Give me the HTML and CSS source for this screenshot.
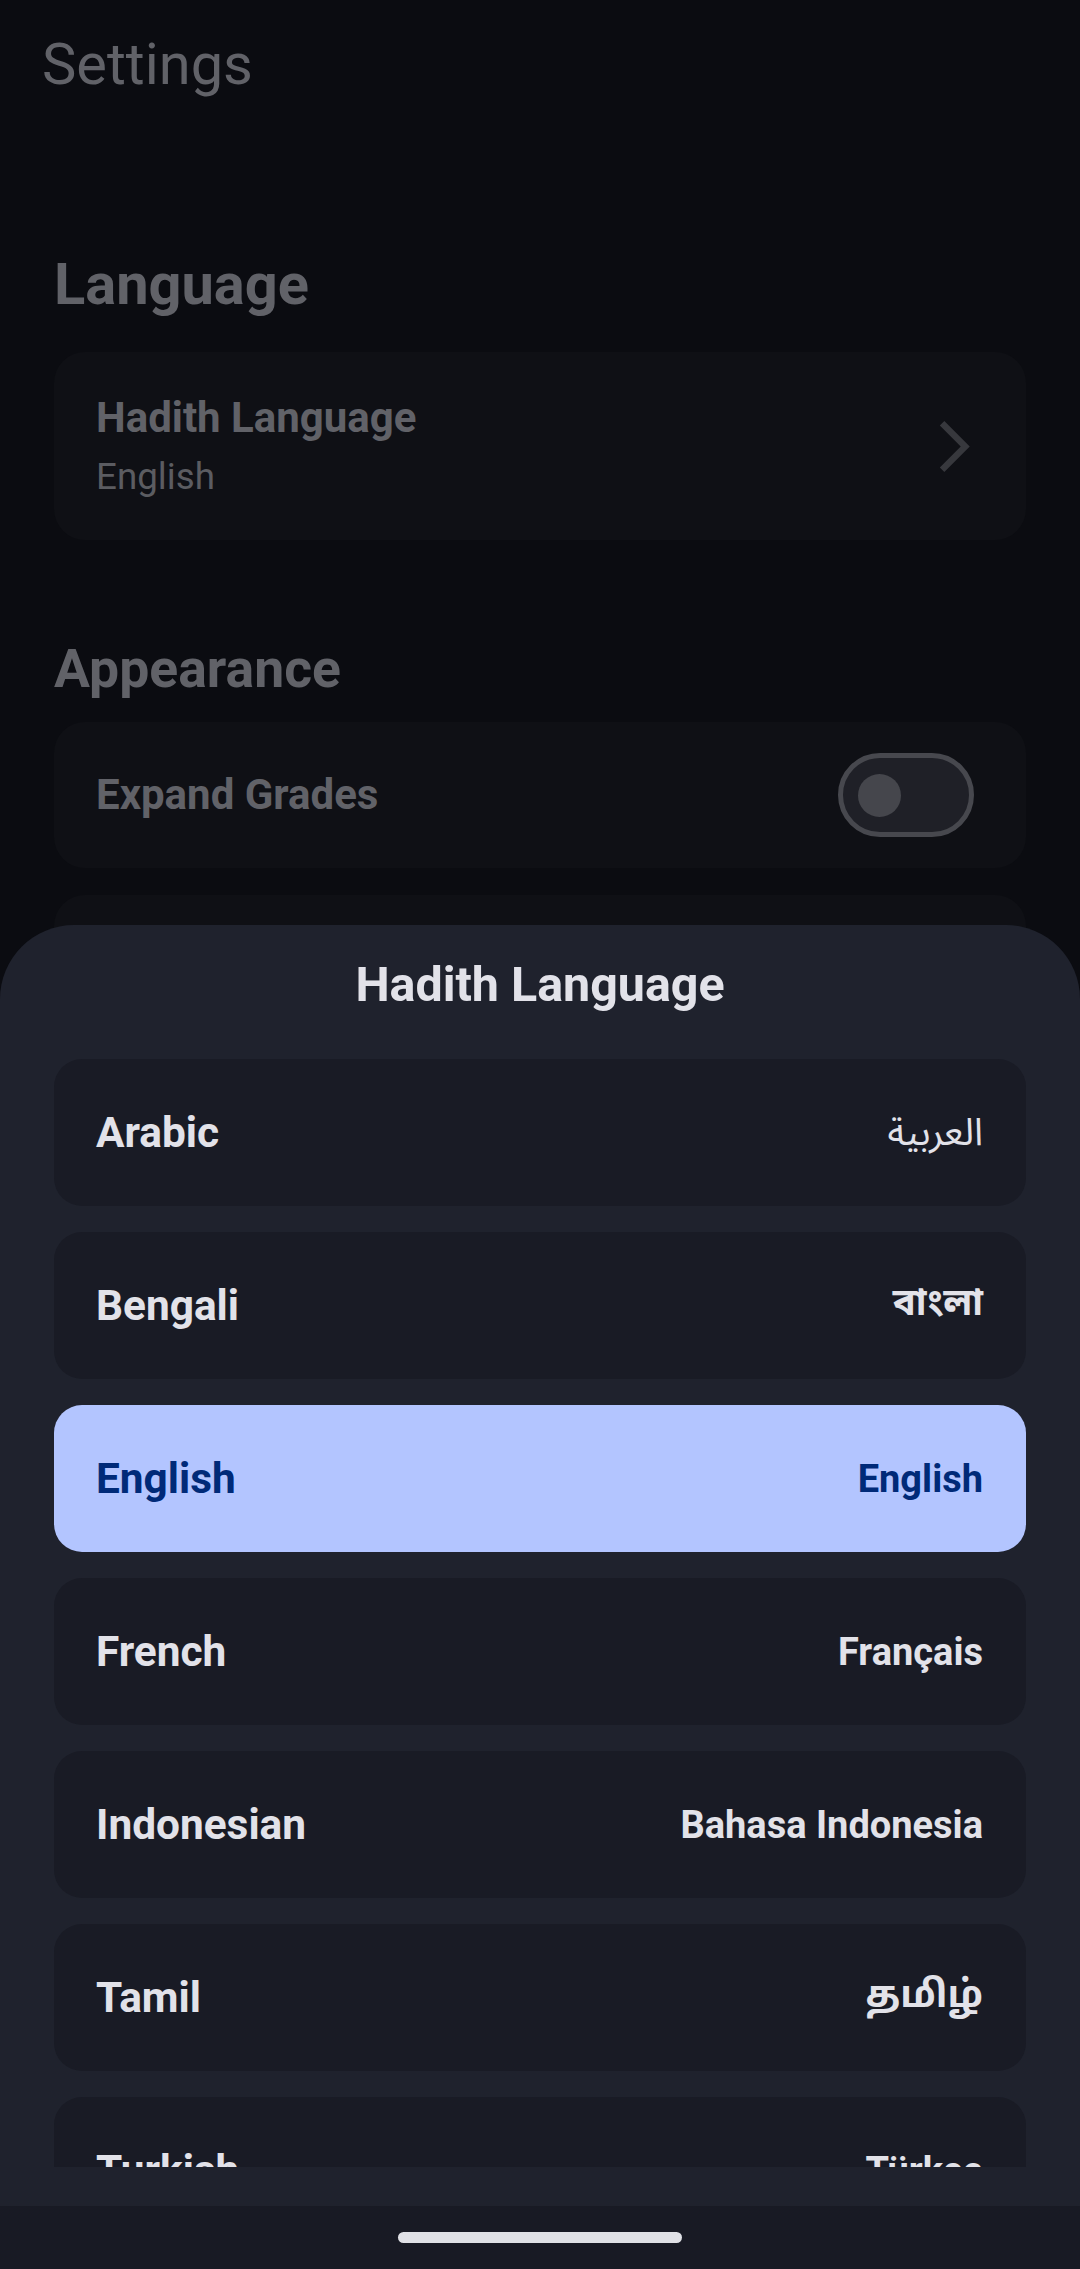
FILE: index.html
```html
<!DOCTYPE html>
<html lang="en">
<head>
<meta charset="utf-8">
<title>Settings</title>
<link rel="stylesheet" href="styles.css">
</head>
<body>
<div class="screen">
  <header class="appbar">
    <h1 class="appbar-title">Settings</h1>
  </header>
  <main class="settings">
    <section class="group group-language">
      <h2 class="group-title title-language">Language</h2>
      <div class="card card-nav">
        <div class="card-text">
          <div class="card-title">Hadith Language</div>
          <div class="card-sub">English</div>
        </div>
        <svg class="chev" viewBox="0 0 24 24" aria-hidden="true"><path d="M6.23 20.23L8 22l10-10L8 2 6.23 3.77 14.46 12z"/></svg>
      </div>
    </section>
    <section class="group group-appearance">
      <h2 class="group-title title-appearance">Appearance</h2>
      <div class="card card-switch">
        <div class="card-title">Expand Grades</div>
        <div class="switch"><div class="thumb"></div></div>
      </div>
      <div class="card card-peek"></div>
    </section>
  </main>

  <div class="sheet">
    <h3 class="sheet-title">Hadith Language</h3>
    <div class="lang-list">
      <div class="lang"><span class="lang-name">Arabic</span><span class="lang-native native-ar" dir="rtl">العربية</span></div>
      <div class="lang"><span class="lang-name">Bengali</span><span class="lang-native native-bn">বাংলা</span></div>
      <div class="lang lang-selected"><span class="lang-name">English</span><span class="lang-native">English</span></div>
      <div class="lang"><span class="lang-name">French</span><span class="lang-native">Français</span></div>
      <div class="lang"><span class="lang-name">Indonesian</span><span class="lang-native">Bahasa Indonesia</span></div>
      <div class="lang"><span class="lang-name">Tamil</span><span class="lang-native native-ta">தமிழ்</span></div>
      <div class="lang"><span class="lang-name">Turkish</span><span class="lang-native">Türkçe</span></div>
    </div>
    <div class="sheet-spacer"></div>
    <div class="navbar"><div class="handle"></div></div>
  </div>
</div>
</body>
</html>
```
FILE: styles.css
```css
* { box-sizing: border-box; }
html, body { margin: 0; padding: 0; }
body {
  background: #0b0c11;
  font-family: Roboto, "Noto Sans", "DejaVu Sans", sans-serif;
  width: 1080px;
  height: 2269px;
  overflow: hidden;
}
.screen {
  position: relative;
  width: 1080px;
  height: 2269px;
  overflow: hidden;
  background: #0b0c11;
}

/* app bar */
.appbar { padding: 30px 0 0 42px; }
.appbar-title {
  margin: 0;
  font-size: 57.75px;
  line-height: 68px;
  font-weight: 400;
  color: #616268;
}

/* settings body */
.settings { padding: 0 54px; }
.group-title {
  margin: 0;
  font-weight: 700;
  color: #616268;
}
.title-language {
  margin-top: 152px;
  font-size: 57.75px;
  line-height: 68px;
  margin-bottom: 34px;
}
.title-appearance {
  margin-top: 98px;
  font-size: 53.5px;
  line-height: 62px;
  margin-bottom: 22px;
}
.card {
  background: #0f1015;
  border-radius: 31px;
}
.card-nav {
  height: 188px;
  display: flex;
  align-items: center;
  justify-content: space-between;
  padding: 0 41px 0 42px;
}
.card-text { display: flex; flex-direction: column; gap: 12px; }
.card-title {
  font-size: 42px;
  line-height: 50px;
  font-weight: 700;
  color: #616268;
}
.card-sub {
  font-size: 36.75px;
  line-height: 44px;
  color: #5b5c61;
}
.chev { width: 61px; height: 61px; fill: #37383d; }

.card-switch {
  height: 146px;
  display: flex;
  align-items: center;
  justify-content: space-between;
  padding: 0 52px 0 42px;
}
.switch {
  width: 136px;
  height: 84px;
  border-radius: 42px;
  border: 5px solid #47484e;
  background: #1f2027;
  display: flex;
  align-items: center;
  padding-left: 15px;
}
.thumb {
  width: 43px;
  height: 43px;
  border-radius: 50%;
  background: #45464c;
}
.card-peek {
  margin-top: 27px;
  height: 120px;
}

/* bottom sheet (overlay) */
.sheet {
  position: absolute;
  left: 0;
  right: 0;
  top: 925px;
  bottom: 0;
  background: #1f222d;
  border-radius: 74px 74px 0 0;
  display: flex;
  flex-direction: column;
}
.sheet-title {
  margin: 32px 0 46px;
  text-align: center;
  font-size: 48.4px;
  line-height: 56px;
  font-weight: 700;
  color: #e2e2e9;
}
.lang-list {
  height: 1108px;
  flex: none;
  overflow: hidden;
  padding: 0 54px;
  display: flex;
  flex-direction: column;
  gap: 26px;
}
.lang {
  flex: none;
  height: 147px;
  border-radius: 28px;
  background: #191b25;
  display: flex;
  align-items: center;
  justify-content: space-between;
  padding: 0 43px 0 42px;
  color: #e2e2e9;
}
.lang-name {
  font-size: 42.4px;
  line-height: 50px;
  font-weight: 700;
}
.lang-native {
  font-size: 38px;
  line-height: 44px;
  font-weight: 700;
}
.native-ar { font-family: "Noto Sans Arabic", "DejaVu Sans", sans-serif; font-weight: 400; font-size: 38px; }
.native-bn { font-family: "Noto Sans Bengali", "Noto Sans", sans-serif; }
.native-ta { font-family: "Noto Sans Tamil", "Noto Sans", sans-serif; font-size: 38px; }
.lang-selected { background: #b3c5ff; color: #002a78; }

.sheet-spacer { flex: 1; }
.navbar {
  height: 63px;
  flex: none;
  background: #181a24;
  display: flex;
  justify-content: center;
  padding-top: 26px;
}
.handle {
  width: 284px;
  height: 11px;
  border-radius: 6px;
  background: #e0e1e6;
}
```
